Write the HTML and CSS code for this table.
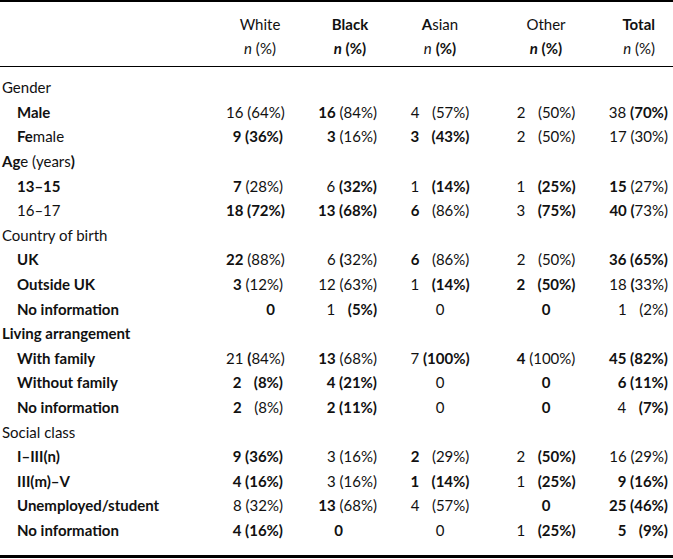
FILE: index.html
```html
<!DOCTYPE html>
<html>
<head>
<meta charset="utf-8">
<link rel="stylesheet" href="styles.css">
</head>
<body>
<div class="tbl">
  <div class="head">
    <div class="row">
      <span class="lbl"></span>
      <span class="hc">White</span>
      <span class="hc"><b>Black</b></span>
      <span class="hc"><b>A</b>sian</span>
      <span class="hc">Other</span>
      <span class="hc ht"><b>Total</b></span>
    </div>
    <div class="row">
      <span class="lbl"></span>
      <span class="hc"><i>n</i> (%)</span>
      <span class="hc"><b><i>n</i> (%)</b></span>
      <span class="hc"><i>n</i> <b>(%)</b></span>
      <span class="hc"><b><i>n</i> (%)</b></span>
      <span class="hc ht"><i>n</i> (%)</span>
    </div>
  </div>
  <div class="body">
    <div class="row"><span class="lbl cat">Gender</span><span class="w"></span><span class="bk"></span><span class="a"></span><span class="o"></span><span class="t"></span></div>
    <div class="row"><span class="lbl sub"><b>Male</b></span><span class="w">16 (64%)</span><span class="bk"><b>16</b> (84%)</span><span class="a">4 &#8199;(57%)</span><span class="o">2 &#8199;(50%)</span><span class="t">38 <b>(70%)</b></span></div>
    <div class="row"><span class="lbl sub"><b>Fe</b>male</span><span class="w"><b>9 (36%)</b></span><span class="bk"><b>3</b> (16%)</span><span class="a"><b>3 &#8199;(43%)</b></span><span class="o">2 &#8199;(50%)</span><span class="t">17 (30%)</span></div>
    <div class="row"><span class="lbl cat"><b>Ag</b>e (years<b>)</b></span><span class="w"></span><span class="bk"></span><span class="a"></span><span class="o"></span><span class="t"></span></div>
    <div class="row"><span class="lbl sub"><b>13–15</b></span><span class="w"><b>7</b> (28%)</span><span class="bk">6 <b>(32%)</b></span><span class="a">1 &#8199;<b>(14%)</b></span><span class="o">1 &#8199;<b>(25%)</b></span><span class="t"><b>15</b> (27%)</span></div>
    <div class="row"><span class="lbl sub">16–17</span><span class="w"><b>18 (72%)</b></span><span class="bk"><b>13 (68%)</b></span><span class="a"><b>6</b> &#8199;(86%)</span><span class="o">3 &#8199;<b>(75%)</b></span><span class="t"><b>40 (</b>73%)</span></div>
    <div class="row"><span class="lbl cat">Country of birth</span><span class="w"></span><span class="bk"></span><span class="a"></span><span class="o"></span><span class="t"></span></div>
    <div class="row"><span class="lbl sub"><b>UK</b></span><span class="w"><b>22</b> (88%)</span><span class="bk">6 <b>(</b>32%)</span><span class="a"><b>6</b> &#8199;(86%)</span><span class="o">2 &#8199;(50%)</span><span class="t"><b>36 (65%)</b></span></div>
    <div class="row"><span class="lbl sub"><b>Outside UK</b></span><span class="w"><b>3</b> (12%)</span><span class="bk">12 (63%)</span><span class="a">1 &#8199;<b>(14%)</b></span><span class="o"><b>2 &#8199;(50%)</b></span><span class="t">18 <b>(</b>33%)</span></div>
    <div class="row"><span class="lbl sub"><b>No information</b></span><span class="w z"><b>0</b></span><span class="bk">1 &#8199;<b>(5%)</b></span><span class="a">0</span><span class="o"><b>0</b></span><span class="t">1 &#8199;(2%)</span></div>
    <div class="row"><span class="lbl cat"><b>Living arrangement</b></span><span class="w"></span><span class="bk"></span><span class="a"></span><span class="o"></span><span class="t"></span></div>
    <div class="row"><span class="lbl sub"><b>With family</b></span><span class="w">21 <b>(</b>84%)</span><span class="bk"><b>13</b> (68%)</span><span class="a">7 <b>(100%)</b></span><span class="o"><b>4</b> (100%)</span><span class="t"><b>45 (82%)</b></span></div>
    <div class="row"><span class="lbl sub"><b>Without family</b></span><span class="w"><b>2 &#8199;(8%)</b></span><span class="bk"><b>4 (21%)</b></span><span class="a">0</span><span class="o"><b>0</b></span><span class="t"><b>6 (11%)</b></span></div>
    <div class="row"><span class="lbl sub"><b>No information</b></span><span class="w"><b>2</b> &#8199;(8%)</span><span class="bk"><b>2 (11%)</b></span><span class="a">0</span><span class="o"><b>0</b></span><span class="t">4 &#8199;<b>(7%)</b></span></div>
    <div class="row"><span class="lbl cat">Social class</span><span class="w"></span><span class="bk"></span><span class="a"></span><span class="o"></span><span class="t"></span></div>
    <div class="row"><span class="lbl sub"><b>I–III(n)</b></span><span class="w"><b>9 (36%)</b></span><span class="bk">3 (16%)</span><span class="a"><b>2</b> &#8199;(29%)</span><span class="o">2 &#8199;<b>(50%)</b></span><span class="t">16 (29%)</span></div>
    <div class="row"><span class="lbl sub"><b>III(m)–V</b></span><span class="w"><b>4 (16%)</b></span><span class="bk">3 (16%)</span><span class="a"><b>1 &#8199;(14%)</b></span><span class="o">1 &#8199;<b>(25%)</b></span><span class="t"><b>9 (16%)</b></span></div>
    <div class="row"><span class="lbl sub"><b>Unemployed/student</b></span><span class="w">8 (32%)</span><span class="bk"><b>13</b> (68%)</span><span class="a">4 &#8199;(57%)</span><span class="o"><b>0</b></span><span class="t"><b>25 (46%)</b></span></div>
    <div class="row"><span class="lbl sub"><b>No information</b></span><span class="w"><b>4 (16%)</b></span><span class="bk z"><b>0</b></span><span class="a">0</span><span class="o">1 &#8199;<b>(25%)</b></span><span class="t"><b>5 &#8199;(9%)</b></span></div>
  </div>
</div>
</body>
</html>
```
FILE: styles.css
```css
html, body {
  margin: 0;
  padding: 0;
  background: #fff;
}
body {
  font-family: "Lato", "Open Sans", "DejaVu Sans", sans-serif;
  font-size: 15px;
  color: #111;
  width: 673px;
}
b { font-weight: 700; }
i { font-style: italic; }

.tbl {
  border-top: 2px solid #000;
  border-bottom: 3px solid #000;
}
.head {
  padding: 10px 0 6px;
  border-bottom: 1px solid #000;
}
.head .row { height: 24px; }
.body {
  padding: 8px 0 13px;
}
.body .row { height: 24.6px; }

.row {
  display: grid;
  grid-template-columns: 226px 68px 112px 68px 144px 55px;
  align-items: center;
  white-space: pre;
}
.lbl.cat { padding-left: 2px; }
.lbl.sub { padding-left: 17px; }

.hc { text-align: center; }
.hc.ht { justify-self: end; padding-right: 18px; }

.w { text-align: right; padding-right: 11px; }
.w.z { padding-right: 19px; }
.bk { text-align: right; padding-right: 29px; }
.bk.z { padding-right: 63px; }
.a { text-align: center; }
.o { text-align: center; }
.t { justify-self: end; padding-right: 5px; }
```
